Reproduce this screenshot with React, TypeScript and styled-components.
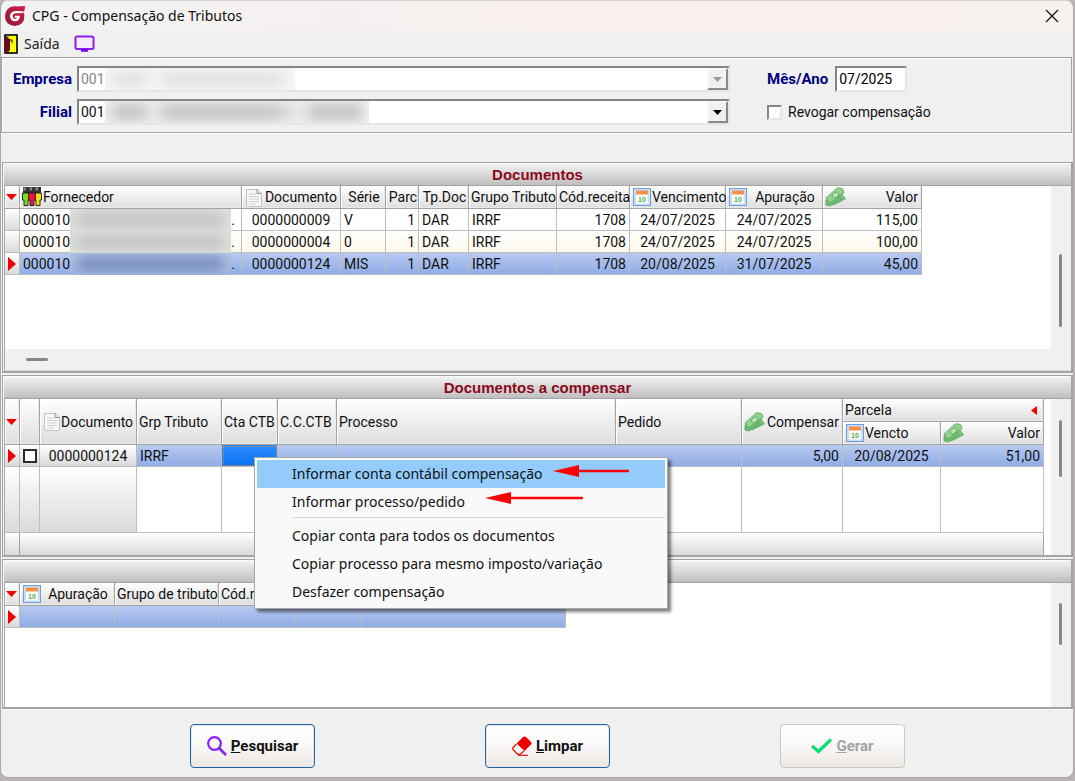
import React from 'react';
import styled, { createGlobalStyle, css } from 'styled-components';

const line = '#a3a3a3';
const cellLine = '#bdbdbd';
const face = '#f0f0f0';
const selected = 'linear-gradient(#b8caf1, #8dabe5)';
const raised = 'linear-gradient(#ffffff, #dadada)';

const GlobalStyle = createGlobalStyle`
  * { box-sizing: border-box; }
  body {
    margin: 0;
    background: #b9b4b6;
    color: #111;
    font: 14px/20px Roboto, "Liberation Sans", sans-serif;
  }
`;

/* ---------- window ---------- */

const Window = styled.main`
  display: flex;
  flex-direction: column;
  min-height: calc(100vh - 3px);
  margin-right: 1px;
  border: 1px solid #a9a9a9;
  border-top-color: #d8d4d4;
  border-radius: 8px;
  background: ${face};
`;

const TitleBar = styled.header`
  display: flex;
  align-items: center;
  gap: 7px;
  height: 30px;
  padding: 0 14px 0 4px;
  border-radius: 8px 8px 0 0;
  background: linear-gradient(90deg, #f3f2f3, #f6f0ef 40%, #faf0ee 75%, #f6f2ef);
`;

const WindowTitle = styled.h1`
  flex: 1;
  margin: 0;
  font: 400 14px/20px "Noto Sans", sans-serif;
`;

const PlainButton = styled.button`
  display: flex;
  align-items: center;
  gap: 6px;
  padding: 0;
  border: 0;
  background: none;
  color: #222;
  font: 14px/20px "Noto Sans", sans-serif;
`;

const Toolbar = styled.nav`
  display: flex;
  align-items: center;
  gap: 14px;
  height: 26px;
  padding-left: 3px;
`;

/* ---------- filter form ---------- */

const Filters = styled.form`
  display: grid;
  grid-template-columns: 70px minmax(200px, 653px) 310px;
  align-content: start;
  row-gap: 7px;
  column-gap: 5px;
  height: 76px;
  padding: 8px 0;
  margin: 0 1px 29px 0;
  border: 1px solid ${line};
  box-shadow: inset 1px 1px #fbfbfb, 0 1px #fbfbfb;
`;

const FieldLabel = styled.label`
  color: #000080;
  font-size: 15px;
  font-weight: 700;
  line-height: 26px;
  text-align: right;
`;

const sunken = css`
  border: 2px solid;
  border-color: #858585 #e6e6e6 #e6e6e6 #858585;
  border-radius: 0;
  background: #fff;
`;

const Combo = styled.div`
  ${sunken}
  position: relative;
  height: 26px;
`;

const ComboSelect = styled.select`
  width: 100%;
  height: 22px;
  padding: 0 2px;
  border: 0;
  appearance: none;
  background: #fff;
  color: #111;
  opacity: 1;
  font: 14px/20px Roboto, sans-serif;
  &:disabled { color: #858585; }
`;

const ComboArrow = styled.span<{ $off?: boolean }>`
  position: absolute;
  top: 0;
  right: 0;
  display: grid;
  place-items: center;
  width: 21px;
  height: 22px;
  border: 2px solid;
  border-color: #f6f6f6 #8a8a8a #8a8a8a #f6f6f6;
  background: ${face};
  color: ${p => (p.$off ? '#9a9a9a' : '#000')};
  pointer-events: none;
`;

const Smudge = styled.span<{ $w: number; $tone: string; $bg: string }>`
  position: absolute;
  top: 0;
  left: 26px;
  width: ${p => p.$w}px;
  height: 22px;
  overflow: hidden;
  background: ${p => p.$bg};
  pointer-events: none;
  &::after {
    content: '';
    position: absolute;
    inset: 3px 7px;
    background: linear-gradient(90deg, ${p => p.$tone} 30px, transparent 40px, ${p => p.$tone} 56px 160px, transparent 190px, ${p => p.$tone} 200px);
    filter: blur(6px);
  }
`;

const SideField = styled.div`
  display: flex;
  align-items: center;
  gap: 6px;
  padding-left: 32px;
`;

const MonthInput = styled.input`
  ${sunken}
  width: 72px;
  height: 26px;
  margin-left: 1px;
  padding: 0 2px;
  font: 14px/20px Roboto, sans-serif;
`;

const SunkenCheck = styled.input`
  ${sunken}
  appearance: none;
  width: 15px;
  height: 15px;
  margin: 0;
`;

/* ---------- grid panels ---------- */

const Panel = styled.section<{ $grow?: boolean }>`
  display: flex;
  flex-direction: column;
  flex: ${p => (p.$grow ? '1 0 148px' : 'none')};
  margin-left: 1px;
  padding: 1px 0 0 1px;
  border: 1px solid ${line};
  border-width: 1px 2px 2px 1px;
  background: #fafafa;
  & + & { margin-top: 2px; }
`;

const PanelTitle = styled.h2`
  height: 22px;
  margin: 0;
  border-bottom: 1px solid ${line};
  background: linear-gradient(#f1f1f1, #bfbfbf);
  color: #8b0a1a;
  font: 700 15px/21px "Liberation Sans", Arial, sans-serif;
  text-align: center;
`;

const PanelBody = styled.div`
  display: flex;
  flex: 1;
  border-left: 1px solid ${line};
  background: ${face};
`;

const Sheet = styled.div<{ $h?: number; $gutter?: boolean }>`
  flex: 1;
  min-width: 0;
  min-height: ${p => p.$h ?? 0}px;
  padding-right: ${p => (p.$gutter ? 7 : 0)}px;
  background: #fff;
`;

const VTrack = styled.div<{ $top: number; $len: number }>`
  width: 20px;
  padding: ${p => p.$top}px 0 0 8px;
  background: ${face};
  &::after {
    content: '';
    display: block;
    width: 3px;
    height: ${p => p.$len}px;
    border-radius: 2px;
    background: #868686;
  }
`;

const HTrack = styled.div`
  height: 22px;
  padding: 9px 0 0 21px;
  border-left: 1px solid ${line};
  border-bottom: 1px solid #d8d8d8;
  background: ${face};
  &::after {
    content: '';
    display: block;
    width: 22px;
    height: 3px;
    border-radius: 2px;
    background: #868686;
  }
`;

const Grid = styled.table<{ $w: string }>`
  width: ${p => p.$w};
  table-layout: fixed;
  border-spacing: 0;
  white-space: nowrap;
`;

const Th = styled.th`
  height: 23px;
  padding: 0 0 0 2px;
  border-right: 1px solid ${line};
  border-bottom: 1px solid ${line};
  box-shadow: inset 1px 1px #fff, inset -1px -1px #e9e9e9;
  background: linear-gradient(#ffffff, #dedede);
  font-weight: 400;
`;

const HeadFlex = styled.span<{ $align?: string }>`
  display: flex;
  align-items: center;
  gap: 1px;
  height: 20px;
  b {
    flex: 1;
    padding-right: ${p => (p.$align === 'right' ? 3 : 0)}px;
    font-weight: 400;
    text-align: ${p => p.$align ?? 'left'};
  }
  svg { flex: none; }
`;

const Row = styled.tr<{ $kind?: 'alt' | 'sel' }>`
  background: ${p => (p.$kind === 'sel' ? selected : p.$kind === 'alt' ? 'linear-gradient(#ffffff, #fdf8ea)' : '#fff')};
`;

const Td = styled.td<{ $align?: string; $raised?: boolean; $focus?: boolean }>`
  position: relative;
  height: 22px;
  padding: 0 3px;
  border-right: 1px solid ${cellLine};
  border-bottom: 1px solid ${cellLine};
  line-height: 20px;
  text-align: ${p => p.$align ?? 'left'};
  ${p => p.$raised && css`background: ${raised};`}
  ${p => p.$focus && css`
    background: linear-gradient(#2b8cff, #0a72f5);
    outline: 1px dotted #d08a3a;
    outline-offset: -2px;
  `}
`;

const Filler = styled(Td)`
  height: 66px;
`;

const FootCell = styled.td`
  height: 22px;
  border-right: 1px solid ${line};
  background: ${raised};
`;

const Redacted = styled.span<{ $sel?: boolean }>`
  position: absolute;
  top: 0;
  left: 50px;
  width: 161px;
  height: 22px;
  overflow: hidden;
  background: ${p => (p.$sel ? 'linear-gradient(#b4c3e2, #a3b7e0)' : '#dededc')};
  &::after {
    content: '';
    position: absolute;
    inset: 5px 8px;
    background: ${p => (p.$sel ? '#7088bc' : '#c0c0be')};
    filter: blur(6px);
  }
`;

const DotMark = styled.span`
  position: absolute;
  right: 6px;
`;

const GridCheck = styled.input`
  display: block;
  appearance: none;
  width: 14px;
  height: 14px;
  margin: 0;
  border: 2px solid #2b2b2b;
  background: #fff;
`;

/* ---------- context menu ---------- */

const Menu = styled.ul`
  position: absolute;
  z-index: 10;
  top: 12px;
  left: 32px;
  width: 414px;
  margin: 0;
  padding: 2px;
  border: 1px solid #a6a6a6;
  background: #f9f9f9;
  box-shadow: 3px 3px 3px rgba(0, 0, 0, 0.5);
  list-style: none;
`;

const MenuButton = styled.button<{ $on?: boolean }>`
  display: flex;
  align-items: center;
  width: 100%;
  height: 28px;
  padding: 0 0 0 35px;
  border: 0;
  background: ${p => (p.$on ? '#93cbfa' : 'none')};
  color: #111;
  font: 14px/20px "Noto Sans", sans-serif;
  text-align: left;
`;

const MenuRule = styled.li`
  height: 6px;
  margin-left: 36px;
  border-top: 1px solid #f9f9f9;
  box-shadow: inset 0 1px #d5d5d5;
`;

const ArrowBox = styled.svg<{ $gap: number }>`
  flex: none;
  margin-left: ${p => p.$gap}px;
`;

/* ---------- footer ---------- */

const Footer = styled.footer`
  display: flex;
  gap: 170px;
  height: 68px;
  padding: 14px 0 0 189px;
  border-top: 1px solid #fbfbfb;
`;

const ActionButton = styled.button`
  display: flex;
  align-items: center;
  justify-content: center;
  gap: 4px;
  width: 125px;
  height: 44px;
  padding: 0;
  border: 1px solid #2a6496;
  border-radius: 4px;
  box-shadow: inset 0 0 0 1px #dfe8f0;
  background: linear-gradient(#ffffff, #fbfaf9 40%, #ece8e4);
  color: #111;
  font: 700 15px/20px Roboto, sans-serif;
  &:disabled {
    border-color: #d0c8bd;
    box-shadow: none;
    color: #a3a3a3;
  }
`;

/* ---------- icons ---------- */

const Logo = () => (
  <svg width="20" height="20" viewBox="0 0 60 60">
    <defs>
      <linearGradient id="logo" x1="0" y1="1" x2="1" y2="0">
        <stop offset="0" stopColor="#8c1c3e" />
        <stop offset="1" stopColor="#d41a45" />
      </linearGradient>
    </defs>
    <path d="M28 1 Q44 2 60 0 Q60 12 56 18 L58 28 Q60 58 29 60 Q0 58 0 30 Q2 3 28 1Z" fill="url(#logo)" />
    <path d="M60 17 Q46 14 31 15 Q15 17 15 31 Q16 46 30 46 Q44 45 45 29 L29 29 L29 35 L36 35 Q34 39 30 39 Q23 38 23 31 Q23 23 32 22 Q46 22 53 21Z" fill="#fff" />
  </svg>
);

const Door = () => (
  <svg width="14" height="20" viewBox="0 0 14 20">
    <rect x="1" y="1" width="12" height="18" fill="#ff0" stroke="#000" strokeWidth="1.6" />
    <path d="M1 1 L5.5 5 V16 L2 19H1Z" fill="#800010" />
    <path d="M5.5 5V16L3 19" fill="none" stroke="#000" strokeWidth="0.8" />
    <path d="M3 1.5H5V3H3Z" fill="#1cb8b8" />
    <path d="M6 6H8V9" fill="none" stroke="#000" />
  </svg>
);

const Monitor = () => (
  <svg width="22" height="18" viewBox="0 0 22 18">
    <rect x="1.5" y="1.5" width="18" height="12.5" rx="1.5" fill="#f5ecff" stroke="#8a1ff0" strokeWidth="2" />
    <path d="M7 15.5H14" stroke="#7a00ee" strokeWidth="2.5" />
  </svg>
);

const Person = ({ x, c }: { x: number; c: string }) => (
  <g transform={`translate(${x} 0)`}>
    <rect x="0" y="0" width="6" height="6" fill="#333" />
    <rect x="0.5" y="0.5" width="2.5" height="3" fill="#8a8a8a" />
    <path d="M-0.5 6H6.5V13H5V18.5H1V13H-0.5Z" fill={c} stroke="#1a1a1a" strokeWidth="0.9" />
  </g>
);

const People = () => (
  <svg width="20" height="20" viewBox="0 0 20 20">
    <Person x={1} c="#7be01c" />
    <Person x={13} c="#f2e20c" />
    <Person x={7} c="#f0143c" />
  </svg>
);

const Sheets = () => (
  <svg width="18" height="19" viewBox="-2 0 18 19">
    <path d="M0.5 1.5H11L15.5 5.5V18.5H0.5Z" fill="#f7f7f7" stroke="#c2c2c2" />
    <path d="M11 1V5.5H15.5" fill="#ddd" stroke="#999" />
    <path d="M3 6H10M3 8.5H13M3 11H13M3 13.5H13M3 16H10" stroke="#cfcfcf" />
  </svg>
);

const Calendar = () => (
  <svg width="19" height="18" viewBox="-1 0 19 18">
    <rect x="0.5" y="0.5" width="17" height="17" fill="#c9ddf4" stroke="#6f9fdc" />
    <path d="M3 6H15V15.5H3Z" fill="#fffdf8" />
    <rect x="3" y="2.5" width="12" height="4" fill="#f5904a" />
    <text x="9" y="13.5" textAnchor="middle" fontSize="7" fontWeight="700" fontFamily="Liberation Sans" fill="#4fae57">10</text>
  </svg>
);

const Money = () => (
  <svg width="21" height="20" viewBox="0 0 21 20">
    <g stroke="#5fa765" strokeWidth="0.8" strokeLinejoin="round">
      <path d="M6 14 L17 7 L20.5 12 L8 18Z" fill="#7cc47c" />
      <path d="M1 13 L13 9 L17 12 L5 19 L1 18Z" fill="#6cb970" />
      <path d="M1 11 L12 1 Q15 0 18 2 L19 6 Q15 7 13 10 L5 16Z" fill="#93d090" />
    </g>
    <ellipse cx="10.5" cy="8" rx="3.4" ry="2.4" transform="rotate(-35 10.5 8)" fill="#b9e6b2" stroke="#5aa860" strokeWidth="0.8" />
  </svg>
);

const DownMark = () => <svg width="11" height="6"><path d="M0 0H11L5.5 6Z" fill="#f00000" /></svg>;
const RightMark = () => <svg width="8" height="14"><path d="M0 0L8 7L0 14Z" fill="#f00000" /></svg>;
const LeftMark = () => <svg width="12" height="9"><path d="M6 0V9L0 4.5Z" fill="#f00" /></svg>;
const ComboMark = () => <svg width="9" height="5"><path d="M0 0H9L4.5 5Z" fill="currentColor" /></svg>;

const CloseMark = () => (
  <svg width="14" height="14" viewBox="0 0 14 14">
    <path d="M1 1L13 13M13 1L1 13" stroke="#111" strokeWidth="1.2" />
  </svg>
);

const Lens = () => (
  <svg width="20" height="20" viewBox="0 0 20 20" fill="none" stroke="#8a1ff0">
    <circle cx="7.5" cy="7.5" r="6.3" strokeWidth="2.2" />
    <path d="M12 12L19 19" strokeWidth="2.6" />
  </svg>
);

const Eraser = () => (
  <svg width="20" height="20" viewBox="0 0 20 20">
    <path d="M10.5 1.5Q12.5 -0.5 14.5 1.5L18.5 5.5Q20.5 7.5 18.5 9L12.5 15L4.5 7.5Z" fill="#f00000" />
    <path d="M4.5 8L1.5 11Q0 12.5 1.5 14L5 17.5Q6.5 19 8 18.3L12 15" fill="#fff" stroke="#e81010" strokeWidth="1.3" />
    <path d="M6 19.3H16" stroke="#e81010" strokeWidth="1.2" />
  </svg>
);

const Tick = () => (
  <svg width="21" height="16" viewBox="0 0 21 16">
    <path d="M1 8L7.5 13.5L20 1.5" fill="none" stroke="#08e070" strokeWidth="3.2" />
  </svg>
);

const Arrow = ({ gap, len, y }: { gap: number; len: number; y: number }) => (
  <ArrowBox $gap={gap} width={len} height="28" aria-hidden="true">
    <path d={`M0 ${y}L26 ${y - 6}V${y + 6}Z`} fill="#f00" />
    <path d={`M20 ${y}H${len - 1}`} stroke="#f00" strokeWidth="2.4" strokeLinecap="round" />
  </ArrowBox>
);

/* ---------- data ---------- */

const docs = [
  { num: '0000000009', serie: 'V', venc: '24/07/2025', apur: '24/07/2025', valor: '115,00' },
  { num: '0000000004', serie: '0', venc: '24/07/2025', apur: '24/07/2025', valor: '100,00' },
  { num: '0000000124', serie: 'MIS', venc: '20/08/2025', apur: '31/07/2025', valor: '45,00' },
];

const Cols = ({ widths }: { widths: (number | null)[] }) => (
  <colgroup>
    {widths.map((w, i) => <col key={i} width={w ?? undefined} />)}
  </colgroup>
);

const Head = ({ icon, align, text, ...rest }: {
  icon?: React.ReactNode; align?: string; text?: string; rowSpan?: number; colSpan?: number;
}) => (
  <Th {...rest}>
    <HeadFlex $align={align}>{icon}{text && <b>{text}</b>}</HeadFlex>
  </Th>
);

const MarkerTh = styled(Th)`
  padding: 0 0 0 1px;
  svg { display: block; }
`;

const MarkerTd = styled(Td)`
  padding: 0 0 0 3px;
  svg { display: block; }
`;

const DocumentsGrid = () => (
  <Grid $w="917px">
    <Cols widths={[15, 222, 99, 45, 33, 50, 88, 73, 96, 97, 99]} />
    <thead>
      <tr>
        <MarkerTh><DownMark /></MarkerTh>
        <Head icon={<People />} text="Fornecedor" />
        <Head icon={<Sheets />} text="Documento" align="right" />
        <Head text="Série" align="center" />
        <Head text="Parc" align="center" />
        <Head text="Tp.Doc" align="center" />
        <Head text="Grupo Tributo" />
        <Head text="Cód.receita" />
        <Head icon={<Calendar />} text="Vencimento" />
        <Head icon={<Calendar />} text="Apuração" align="center" />
        <Head icon={<Money />} text="Valor" align="right" />
      </tr>
    </thead>
    <tbody>
      {docs.map((d, i) => (
        <Row key={d.num} $kind={i === 2 ? 'sel' : i === 1 ? 'alt' : undefined}>
          <MarkerTd $raised>{i === 2 && <RightMark />}</MarkerTd>
          <Td>000010<Redacted $sel={i === 2} /><DotMark>.</DotMark></Td>
          <Td $align="center">{d.num}</Td>
          <Td>{d.serie}</Td>
          <Td $align="right">1</Td>
          <Td>DAR</Td>
          <Td>IRRF</Td>
          <Td $align="right">1708</Td>
          <Td $align="center">{d.venc}</Td>
          <Td $align="center">{d.apur}</Td>
          <Td $align="right">{d.valor}</Td>
        </Row>
      ))}
    </tbody>
  </Grid>
);

const ContextMenu = () => (
  <Menu role="menu">
    <li><MenuButton role="menuitem" $on>Informar conta contábil compensação<Arrow gap={10} len={76} y={11} /></MenuButton></li>
    <li><MenuButton role="menuitem">Informar processo/pedido<Arrow gap={20} len={98} y={10} /></MenuButton></li>
    <MenuRule role="separator" />
    <li><MenuButton role="menuitem">Copiar conta para todos os documentos</MenuButton></li>
    <li><MenuButton role="menuitem">Copiar processo para mesmo imposto/variação</MenuButton></li>
    <li><MenuButton role="menuitem">Desfazer compensação</MenuButton></li>
  </Menu>
);

const CompensateGrid = () => (
  <Grid $w="100%">
    <Cols widths={[15, 20, 97, 85, 56, 59, null, 126, 101, 98, 103]} />
    <thead>
      <tr>
        <MarkerTh rowSpan={2}><DownMark /></MarkerTh>
        <Th rowSpan={2} />
        <Head rowSpan={2} icon={<Sheets />} text="Documento" align="right" />
        <Head rowSpan={2} text="Grp Tributo" />
        <Head rowSpan={2} text="Cta CTB" />
        <Head rowSpan={2} text="C.C.CTB" />
        <Head rowSpan={2} text="Processo" />
        <Head rowSpan={2} text="Pedido" />
        <Head rowSpan={2} icon={<Money />} text="Compensar" align="right" />
        <Th colSpan={2}><HeadFlex><b>Parcela</b><LeftMark /></HeadFlex></Th>
      </tr>
      <tr>
        <Head icon={<Calendar />} text="Vencto" />
        <Head icon={<Money />} text="Valor" align="right" />
      </tr>
    </thead>
    <tbody>
      <Row $kind="sel">
        <MarkerTd $raised><RightMark /></MarkerTd>
        <Td $raised><GridCheck type="checkbox" aria-label="Selecionar documento" /></Td>
        <Td $raised $align="center">0000000124</Td>
        <Td>IRRF</Td>
        <Td $focus><ContextMenu /></Td>
        <Td /><Td /><Td />
        <Td $align="right">5,00</Td>
        <Td $align="center">20/08/2025</Td>
        <Td $align="right">51,00</Td>
      </Row>
      <Row>
        <Filler $raised /><Filler $raised /><Filler $raised />
        <Filler /><Filler /><Filler /><Filler /><Filler /><Filler /><Filler /><Filler />
      </Row>
    </tbody>
    <tfoot>
      <tr><FootCell /><FootCell colSpan={10} /></tr>
    </tfoot>
  </Grid>
);

const SummaryGrid = () => (
  <Grid $w="561px">
    <Cols widths={[15, 95, 104, 76, 67, 204]} />
    <thead>
      <tr>
        <MarkerTh><DownMark /></MarkerTh>
        <Head icon={<Calendar />} text="Apuração" align="center" />
        <Head text="Grupo de tributo" />
        <Head text="Cód.receita" />
        <Th /><Th />
      </tr>
    </thead>
    <tbody>
      <Row $kind="sel">
        <MarkerTd $raised><RightMark /></MarkerTd>
        <Td /><Td /><Td /><Td /><Td />
      </Row>
    </tbody>
  </Grid>
);

export default function App() {
  return (
    <>
      <GlobalStyle />
      <Window>
        <TitleBar>
          <Logo />
          <WindowTitle>CPG - Compensação de Tributos</WindowTitle>
          <PlainButton aria-label="Fechar"><CloseMark /></PlainButton>
        </TitleBar>
        <Toolbar>
          <PlainButton><Door />Saída</PlainButton>
          <PlainButton aria-label="Monitor"><Monitor /></PlainButton>
        </Toolbar>

        <Filters>
          <FieldLabel htmlFor="empresa">Empresa</FieldLabel>
          <Combo>
            <ComboSelect id="empresa" disabled><option>001</option></ComboSelect>
            <Smudge $w={190} $tone="#e2e2e2" $bg="#f7f7f7" />
            <ComboArrow $off><ComboMark /></ComboArrow>
          </Combo>
          <SideField>
            <FieldLabel htmlFor="mes">Mês/Ano</FieldLabel>
            <MonthInput id="mes" defaultValue="07/2025" />
          </SideField>
          <FieldLabel htmlFor="filial">Filial</FieldLabel>
          <Combo>
            <ComboSelect id="filial"><option>001</option></ComboSelect>
            <Smudge $w={264} $tone="#c4c4c4" $bg="#f0f0f0" />
            <ComboArrow><ComboMark /></ComboArrow>
          </Combo>
          <SideField>
            <SunkenCheck id="revogar" type="checkbox" />
            <label htmlFor="revogar">Revogar compensação</label>
          </SideField>
        </Filters>

        <Panel>
          <PanelTitle>Documentos</PanelTitle>
          <PanelBody>
            <Sheet $h={163}><DocumentsGrid /></Sheet>
            <VTrack $top={68} $len={73} />
          </PanelBody>
          <HTrack />
        </Panel>

        <Panel>
          <PanelTitle>Documentos a compensar</PanelTitle>
          <PanelBody>
            <Sheet $gutter><CompensateGrid /></Sheet>
            <VTrack $top={21} $len={57} />
          </PanelBody>
        </Panel>

        <Panel $grow>
          <PanelTitle aria-label="Resumo" />
          <PanelBody>
            <Sheet><SummaryGrid /></Sheet>
            <VTrack $top={20} $len={42} />
          </PanelBody>
        </Panel>

        <Footer>
          <ActionButton><Lens /><span><u>P</u>esquisar</span></ActionButton>
          <ActionButton><Eraser /><span><u>L</u>impar</span></ActionButton>
          <ActionButton disabled><Tick /><span><u>G</u>erar</span></ActionButton>
        </Footer>
      </Window>
    </>
  );
}
